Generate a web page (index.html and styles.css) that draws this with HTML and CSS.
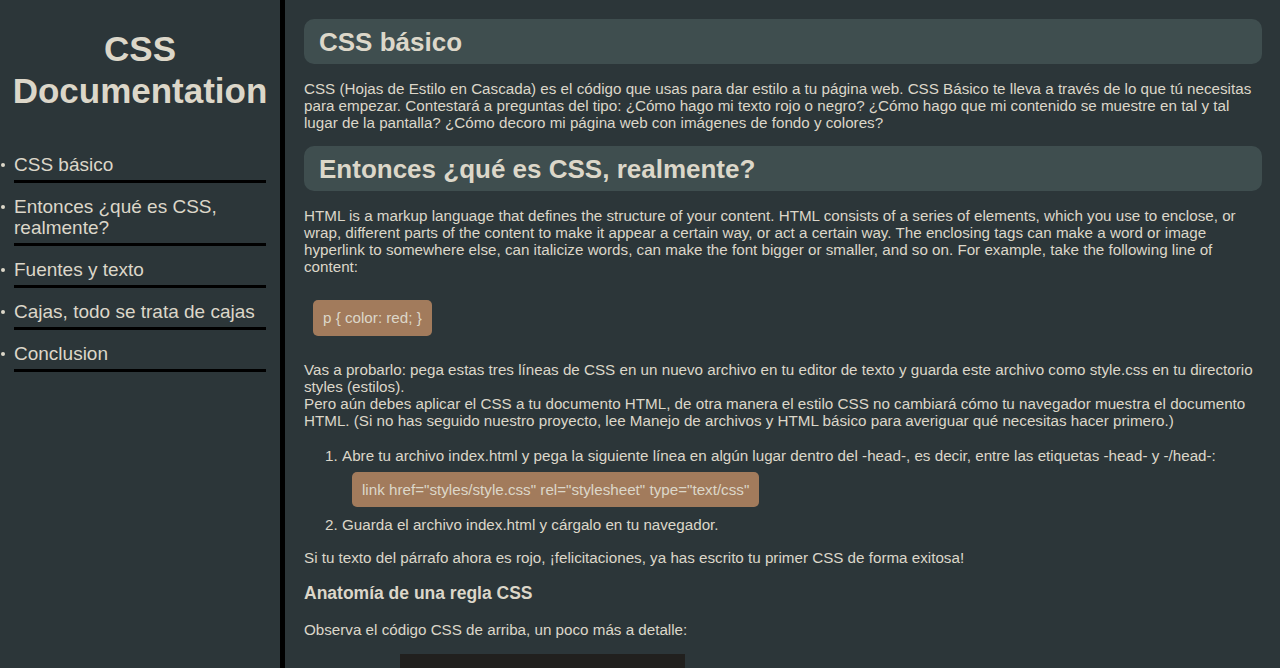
FILE: index.html
```html
<!DOCTYPE html>
<html lang="es">
<head>
<meta charset="utf-8">
<title>CSS Documentation</title>
<link rel="stylesheet" href="styles.css">
</head>
<body>
<div class="layout">
  <nav class="sidebar" id="navbar">
    <header><h1 class="title">CSS Documentation</h1></header>
    <ul class="nav-list">
      <li class="nav-item"><a class="nav-link" href="#CSS_básico">CSS básico</a></li>
      <li class="nav-item"><a class="nav-link" href="#Entonces">Entonces ¿qué es CSS, realmente?</a></li>
      <li class="nav-item"><a class="nav-link" href="#Fuentes">Fuentes y texto</a></li>
      <li class="nav-item"><a class="nav-link" href="#Cajas">Cajas, todo se trata de cajas</a></li>
      <li class="nav-item"><a class="nav-link" href="#Conclusion">Conclusion</a></li>
    </ul>
  </nav>
  <main class="main" id="main-doc">
    <section class="section" id="CSS_básico">
      <h2 class="section-title">CSS básico</h2>
      <p>CSS (Hojas de Estilo en Cascada) es el código que usas para dar estilo a tu página web. CSS Básico te lleva a través de lo que tú necesitas para empezar. Contestará a preguntas del tipo: ¿Cómo hago mi texto rojo o negro? ¿Cómo hago que mi contenido se muestre en tal y tal lugar de la pantalla? ¿Cómo decoro mi página web con imágenes de fondo y colores?</p>
    </section>
    <section class="section" id="Entonces">
      <h2 class="section-title">Entonces ¿qué es CSS, realmente?</h2>
      <p>HTML is a markup language that defines the structure of your content. HTML consists of a series of elements, which you use to enclose, or wrap, different parts of the content to make it appear a certain way, or act a certain way. The enclosing tags can make a word or image hyperlink to somewhere else, can italicize words, can make the font bigger or smaller, and so on. For example, take the following line of content:</p>
      <code class="snippet">p { color: red; }</code>
      <p>Vas a probarlo: pega estas tres líneas de CSS en un nuevo archivo en tu editor de texto y guarda este archivo como style.css en tu directorio styles (estilos).<br>Pero aún debes aplicar el CSS a tu documento HTML, de otra manera el estilo CSS no cambiará cómo tu navegador muestra el documento HTML. (Si no has seguido nuestro proyecto, lee Manejo de archivos y HTML básico para averiguar qué necesitas hacer primero.)</p>
      <ol class="steps">
        <li>Abre tu archivo index.html y pega la siguiente línea en algún lugar dentro del -head-, es decir, entre las etiquetas -head- y -/head-:
          <code class="snippet snippet-inline">link href="styles/style.css" rel="stylesheet" type="text/css"</code>
        </li>
        <li>Guarda el archivo index.html y cárgalo en tu navegador.</li>
      </ol>
      <p>Si tu texto del párrafo ahora es rojo, ¡felicitaciones, ya has escrito tu primer CSS de forma exitosa!</p>
      <h3 class="sub-title">Anatomía de una regla CSS</h3>
      <p>Observa el código CSS de arriba, un poco más a detalle:</p>
      <div class="figure" role="img" aria-label="Anatomía de una regla CSS"></div>
    </section>
  </main>
</div>
</body>
</html>
```

FILE: styles.css
```css
html, body {
  margin: 0;
  padding: 0;
}

body {
  background: #2c3639;
  color: #dcd7c9;
  font-family: "Liberation Sans", Arial, sans-serif;
  font-size: 15.2px;
}

.layout {
  display: flex;
  height: 100vh;
}

.sidebar {
  width: 280px;
  flex-shrink: 0;
  border-right: 5px solid #000;
  box-sizing: content-box;
}

.title {
  margin: 28px 0 0;
  font-size: 35px;
  line-height: 42px;
  font-weight: bold;
  text-align: center;
}

.nav-list {
  list-style: none;
  margin: 42px 0 0;
  padding: 0 14px;
}

.nav-item {
  font-size: 19px;
  line-height: 21px;
  padding-bottom: 5px;
  margin-bottom: 13px;
  border-bottom: 3px solid #000;
}

.nav-item::before {
  content: "";
  display: inline-block;
  width: 4px;
  height: 4px;
  border-radius: 50%;
  background: #dcd7c9;
  margin-left: -13px;
  margin-right: 9px;
  vertical-align: 4px;
}

.nav-link {
  color: #dcd7c9;
  text-decoration: none;
}

.main {
  flex: 1;
  min-width: 0;
  padding: 4px 18px 0 19px;
  overflow-y: auto;
  scrollbar-width: none;
}

.section-title {
  margin: 15px 0 16px;
  padding: 8px 15px 7px;
  background: #3f4e4f;
  border-radius: 10px;
  font-size: 26px;
  line-height: 30px;
  font-weight: bold;
}

p {
  margin: 15px 0;
  line-height: 17px;
}

.snippet {
  display: block;
  width: fit-content;
  margin: 25px 9px;
  padding: 9px 10px 10px;
  background: #a27b5c;
  border-radius: 5px;
  font-family: "Liberation Sans", Arial, sans-serif;
  font-size: 15.2px;
  line-height: 17px;
}

.snippet-inline {
  margin: 8px 0 9px 10px;
  padding: 9px 10px;
}

.steps {
  margin: 18px 0 16px;
  padding-left: 38px;
  line-height: 17px;
}

.sub-title {
  margin: 17px 0 18px;
  font-size: 17.5px;
  line-height: 20px;
  font-weight: bold;
}

.figure {
  margin: 16px 0 15px 96px;
  width: 285px;
  height: 180px;
  background: #21201e;
}
```
